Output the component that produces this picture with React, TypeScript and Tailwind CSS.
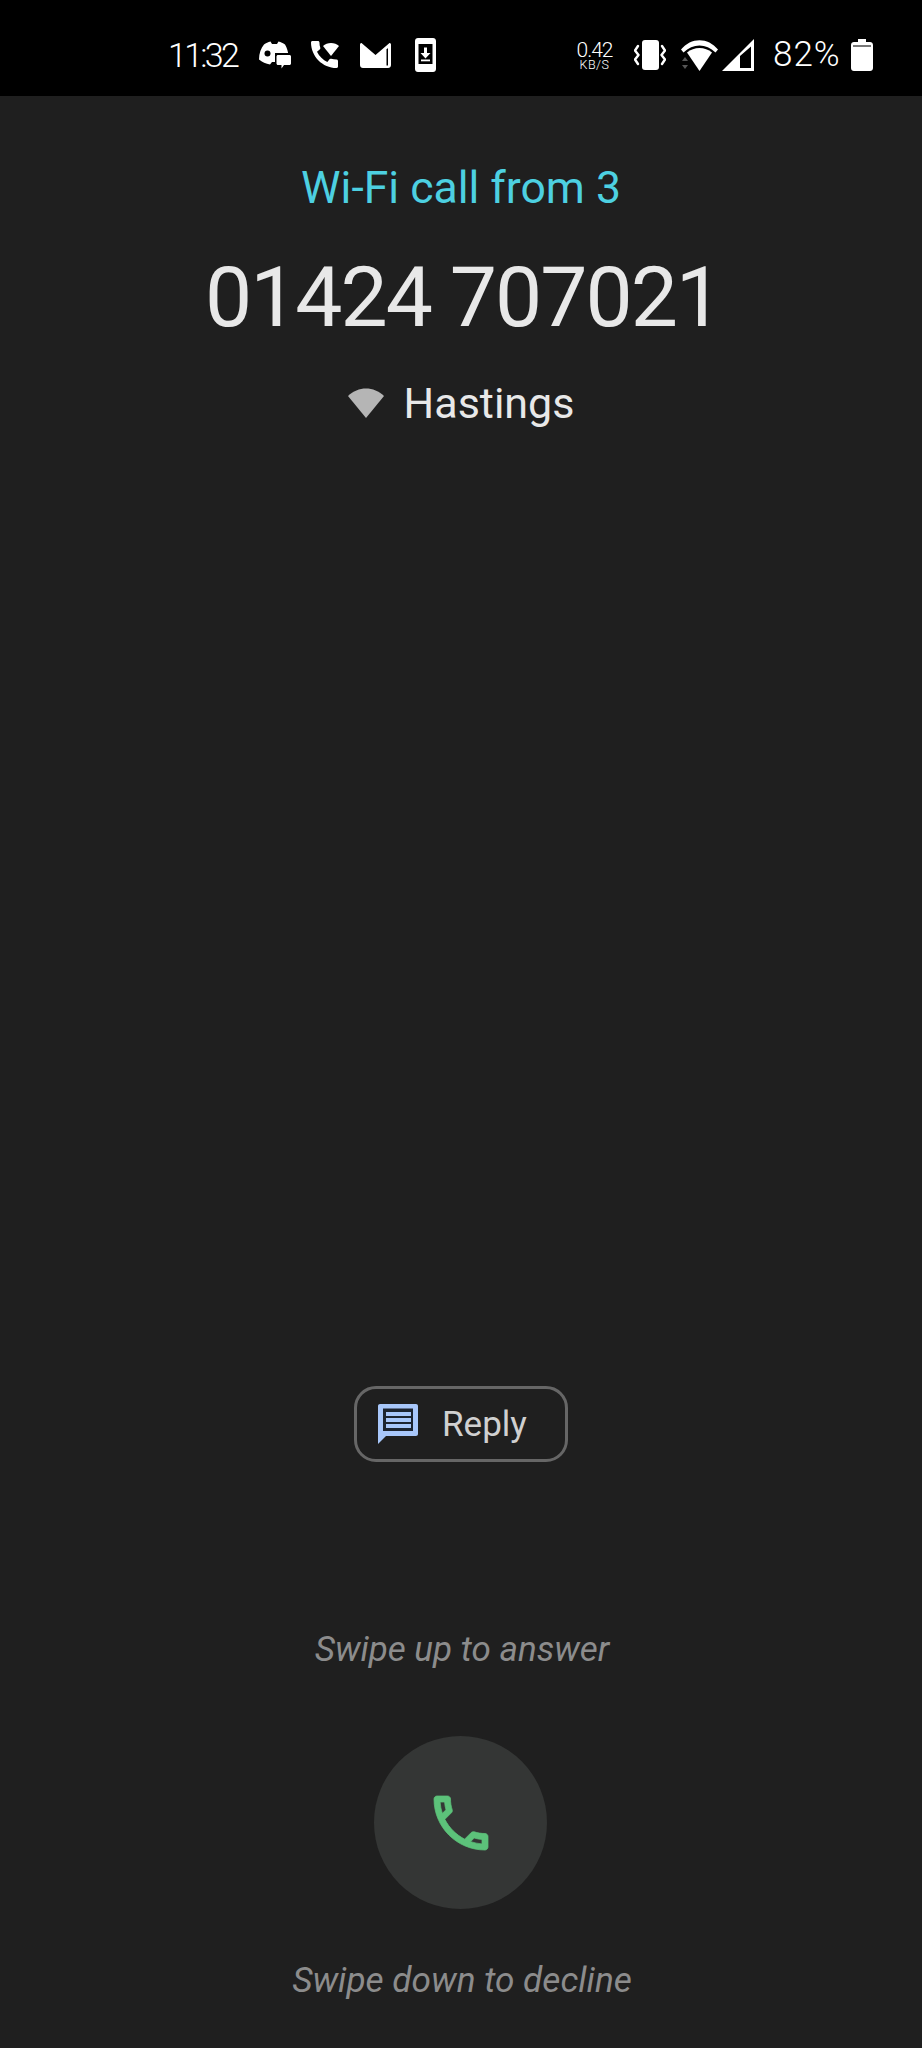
import React from "react";

const sans = "font-['Roboto',sans-serif]";

function DiscordChat() {
  return (
    <svg width="33" height="28" viewBox="0 0 33 28" fill="white">
      <path d="M6 3.5 C8 2 10 1 12.5 .5 L14 3 H19 L20.5 .5 C23 1 25 2 27 3.5 C29 7 30 10 30.5 15 C28 19 24 21.5 21 22 L19.5 20 L17 21 H14 L12 23.5 C8 23 4 21 1 18.5 C1 12 3 7 6 3.5 Z" />
      <circle cx="9.5" cy="12.5" r="3" fill="black" />
      <path d="M19 12 H33 V25 H27 L24 28 L21 25 H17 V12 Z" fill="black" />
      <path d="M20 14 H31.5 C32.3 14 33 14.7 33 15.5 V22.5 C33 23.3 32.3 24 31.5 24 H26 L23.5 27.5 V24 H20 C19.2 24 18.5 23.3 18.5 22.5 V15.5 C18.5 14.7 19.2 14 20 14 Z" />
    </svg>
  );
}

function PhoneWifi() {
  return (
    <svg width="28" height="28" viewBox="0 0 28 28" fill="white">
      <g transform="scale(1.5) translate(-3 -3)">
        <path d="M20.01 15.38c-1.23 0-2.42-.2-3.53-.56a.977.977 0 0 0-1.01.24l-1.57 1.97c-2.83-1.35-5.48-3.9-6.89-6.83l1.95-1.66c.27-.28.35-.67.24-1.02-.37-1.11-.56-2.3-.56-3.53 0-.54-.45-.99-.99-.99H4.19C3.65 3 3 3.24 3 3.99 3 13.28 10.73 21 20.01 21c.71 0 .99-.63.99-1.18v-3.45c0-.54-.45-.99-.99-.99z" />
      </g>
      <path d="M12 5 C16 1 24 1 28 5 L20 15 Z" />
    </svg>
  );
}

function GmailIcon() {
  return (
    <svg width="31" height="25" viewBox="0 0 31 25" fill="white">
      <path d="M1.5 0 L15.5 12 L29.5 0 C30.3 0 31 .7 31 1.5 V22 C31 23.7 29.7 25 28 25 H3 C1.3 25 0 23.7 0 22 V1.5 C0 .7 .7 0 1.5 0 Z" />
      <path d="M26.5 6.5 L28 5 V22.5 H26.5 Z" fill="black" />
    </svg>
  );
}

function PhoneDownload() {
  return (
    <svg width="21" height="34" viewBox="0 0 21 34" fill="white">
      <path
        fillRule="evenodd"
        d="M3 0 H18 C19.7 0 21 1.3 21 3 V31 C21 32.7 19.7 34 18 34 H3 C1.3 34 0 32.7 0 31 V3 C0 1.3 1.3 0 3 0 Z M3.5 6 V26 H17.5 V6 Z"
      />
      <path d="M9 9.5 H12 V15 H15.5 L10.5 20.5 L5.5 15 H9 Z" />
      <rect x="6" y="21.5" width="9" height="1.8" />
    </svg>
  );
}

function Vibrate() {
  return (
    <svg width="32" height="30" viewBox="0 0 32 30" fill="white">
      <rect x="8" y="0" width="17" height="30" rx="3" />
      <path d="M4 6 L1 10.5 L4.5 15 L1 19.5 L4 24" fill="none" stroke="white" strokeWidth="2.4" strokeLinecap="round" strokeLinejoin="round" />
      <path d="M28 6 L31 10.5 L27.5 15 L31 19.5 L28 24" fill="none" stroke="white" strokeWidth="2.4" strokeLinecap="round" strokeLinejoin="round" />
    </svg>
  );
}

function WifiStatus() {
  return (
    <svg width="37" height="31" viewBox="0 0 37 31" fill="white">
      <path d="M0 9.5 C10 -3 27 -3 37 9.5 L34.5 12.5 C25 3 12 3 2.5 12.5 Z" />
      <path d="M6 12.5 C13 6.5 24 6.5 31 12.5 L18.5 31 Z" />
      <path d="M4 17 L7 21 H1 Z" fill="#555" />
      <path d="M1 25 H7 L4 29 Z" fill="#555" />
    </svg>
  );
}

function Signal() {
  return (
    <svg width="32" height="32" viewBox="0 0 32 32" fill="white">
      <path fillRule="evenodd" d="M32 0 V32 H0 Z M29 7.5 L18 17 V29 H29 Z" />
    </svg>
  );
}

function Battery() {
  return (
    <svg width="22" height="32" viewBox="0 0 22 32" fill="white">
      <path d="M7 0 H15 V3 H19 C20.7 3 22 4.3 22 6 V29 C22 30.7 20.7 32 19 32 H3 C1.3 32 0 30.7 0 29 V6 C0 4.3 1.3 3 3 3 H7 Z" />
      <rect x="2" y="6" width="18" height="2" fill="#777" />
    </svg>
  );
}

function MessageIcon() {
  return (
    <svg width="40" height="40" viewBox="0 0 40 40">
      <path fill="#a8c7fa" d="M2 0 H38 C39.1 0 40 .9 40 2 V30 C40 31.1 39.1 32 38 32 H8 L0 40 V2 C0 .9 .9 0 2 0 Z" />
      <rect x="5" y="4.5" width="30" height="22.5" fill="#1c2430" />
      <rect x="8" y="8" width="25" height="4" fill="#a8c7fa" />
      <rect x="8" y="14" width="25" height="4" fill="#a8c7fa" />
      <rect x="8" y="20" width="25" height="4" fill="#a8c7fa" />
    </svg>
  );
}

function CallIcon() {
  return (
    <svg width="72" height="72" viewBox="0 0 24 24" fill="#5cc27a" stroke="#5cc27a" strokeWidth="0.25">
      <path d="M6.54 5c.06.89.21 1.76.45 2.59l-1.2 1.2c-.41-1.2-.67-2.47-.76-3.79h1.51m9.86 12.02c.85.24 1.72.39 2.6.45v1.49c-1.32-.09-2.59-.35-3.8-.75l1.2-1.19M7.5 3H4c-.55 0-1 .45-1 1 0 9.39 7.61 17 17 17 .55 0 1-.45 1-1v-3.49c0-.55-.45-1-1-1-1.24 0-2.45-.2-3.57-.57-.1-.04-.21-.05-.31-.05-.26 0-.51.1-.71.29l-2.2 2.2c-2.83-1.45-5.15-3.76-6.59-6.59l2.2-2.2c.28-.28.36-.67.25-1.02C8.7 6.45 8.5 5.25 8.5 4c0-.55-.45-1-1-1z" />
    </svg>
  );
}

export default function App() {
  return (
    <div className={`${sans} w-full min-h-[2048px] bg-[#1f1f1f] flex flex-col items-center`}>
      {/* status bar */}
      <div className="w-full h-[96px] bg-black text-white flex items-center justify-between pl-[168px] pr-[49px] pt-[14px]">
        <div className="flex items-center">
          <span className="text-[34px] font-light tracking-[-2.7px] w-[90px]">11:32</span>
          <DiscordChat />
          <div className="ml-[20px]"><PhoneWifi /></div>
          <div className="ml-[21px]"><GmailIcon /></div>
          <div className="ml-[24px]"><PhoneDownload /></div>
        </div>
        <div className="flex items-center">
          <div className="flex flex-col items-center w-[37px] font-light leading-none">
            <span className="text-[21px] tracking-[-1px] leading-[18px]">0.42</span>
            <span className="text-[12.5px] tracking-[0.5px] leading-[11px]">KB/S</span>
          </div>
          <div className="ml-[21px]"><Vibrate /></div>
          <div className="ml-[15px]"><WifiStatus /></div>
          <div className="ml-[4px]"><Signal /></div>
          <span className="ml-[19px] text-[35px] font-light tracking-[1px] w-[78px]">82%</span>
          <Battery />
        </div>
      </div>

      {/* caller */}
      <div className="mt-[66px] text-[44.5px] leading-[52px] text-[#4dd0e1]">Wi-Fi call from 3</div>
      <div className="mt-[34px] pl-[4px] text-[84px] leading-[100px] text-[#e8e8e8] tracking-[-2px]">01424 707021</div>
      <div className="mt-[30px] flex items-center gap-[20px]">
        <svg width="36" height="30" viewBox="0 0 36 30" fill="#b5b5b5">
          <path d="M0 8 C10 -2 26 -2 36 8 L18 30 Z" />
        </svg>
        <span className="text-[43px] leading-[50px] text-[#e8e8e8]">Hastings</span>
      </div>

      {/* reply */}
      <div className="mt-[958px] w-[214px] h-[76px] border-[3px] border-[#666] rounded-[22px] flex items-center pl-[21px]">
        <MessageIcon />
        <span className="ml-[24px] mt-[3px] text-[35px] text-[#d0d0d0]">Reply</span>
      </div>

      {/* swipe actions */}
      <div className="mt-[168px] pl-[2px] text-[35px] leading-[40px] italic text-[#8c8c8c]">Swipe up to answer</div>
      <div className="mt-[66px] -ml-[1px] w-[173px] h-[173px] rounded-full bg-[#343635] flex items-center justify-center">
        <CallIcon />
      </div>
      <div className="mt-[51px] pl-[2px] text-[35.2px] leading-[40px] italic text-[#8c8c8c]">Swipe down to decline</div>
    </div>
  );
}
